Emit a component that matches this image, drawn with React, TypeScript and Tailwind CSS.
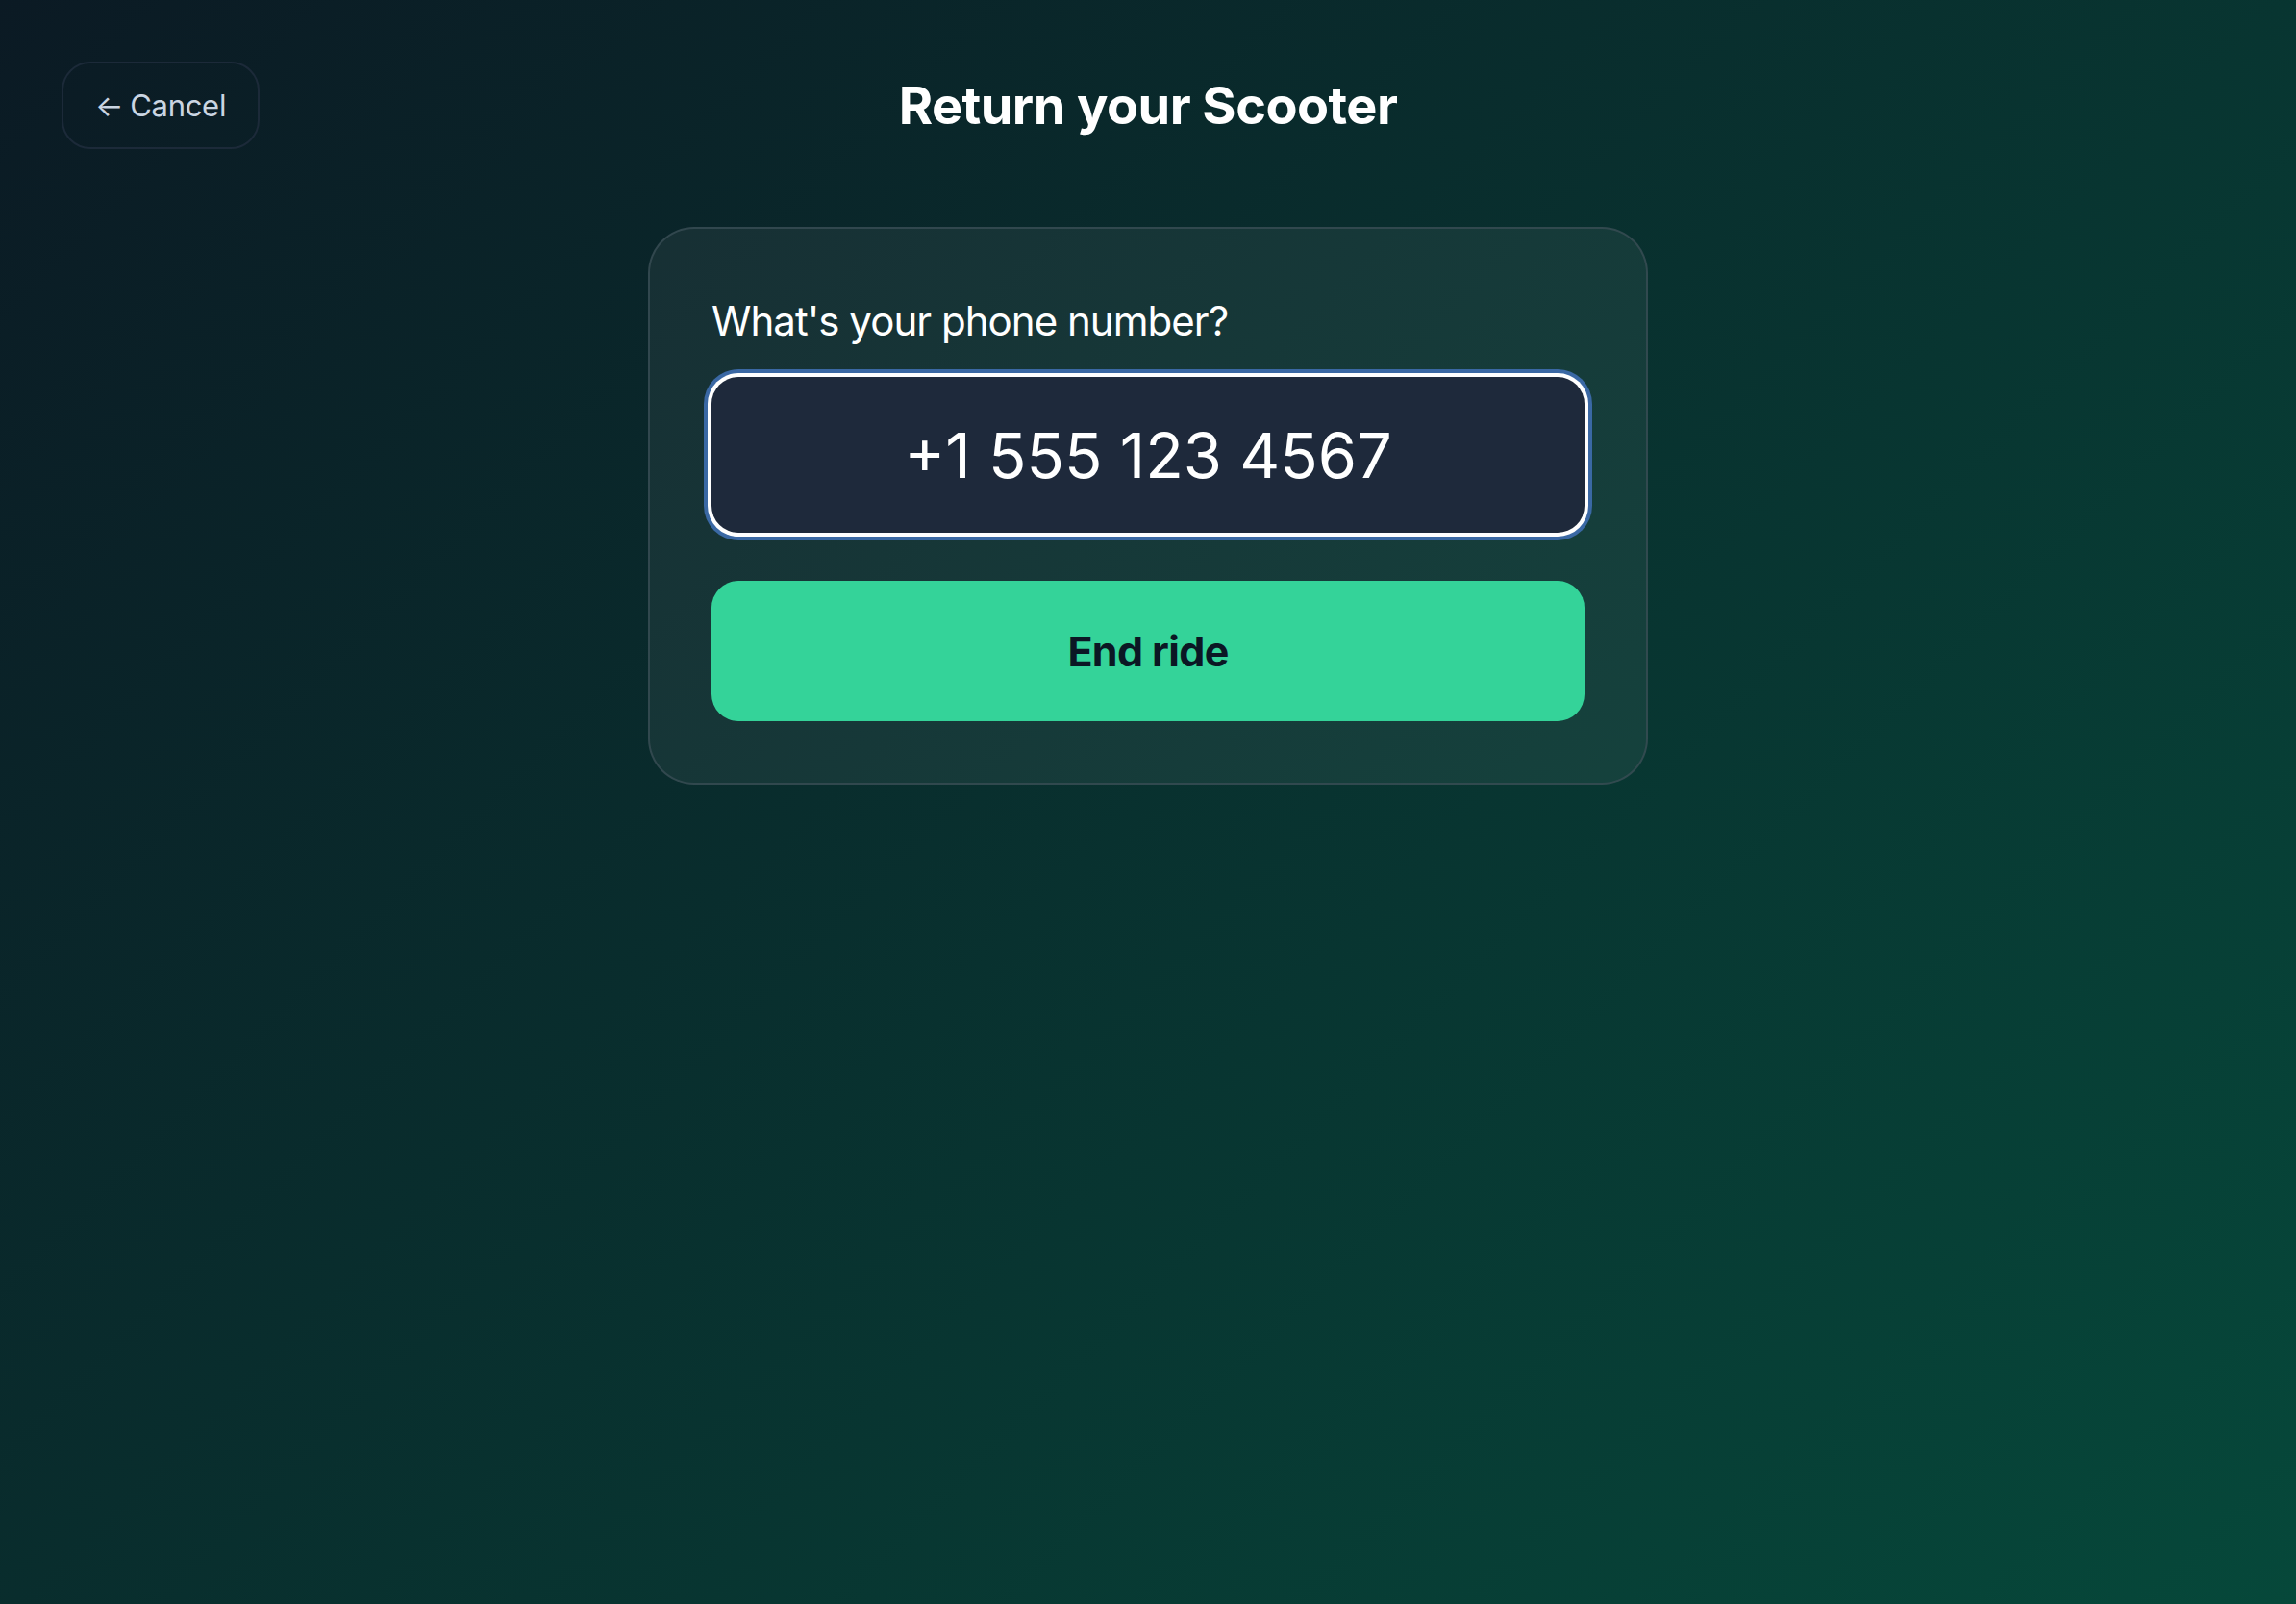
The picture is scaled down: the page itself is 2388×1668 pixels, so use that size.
import React from "react";

const ReturnScooter = () => {
  return (
    <div className="min-h-screen w-full bg-[linear-gradient(135deg,#0b1a24_0%,#06483a_100%)] font-['Inter','Noto_Sans',sans-serif] text-white">
      <header className="grid grid-cols-[1fr_auto_1fr] items-center px-16 pt-16">
        <div className="flex">
          <button
            type="button"
            className="flex h-[91px] items-center gap-[7px] rounded-[30px] border-2 border-[#1c2a39] px-[33px] text-[31px] tracking-[-0.01em] text-slate-300"
          >
            <span className="leading-none">←</span>
            <span className="leading-none">Cancel</span>
          </button>
        </div>
        <h1 className="text-[54px] font-bold leading-none tracking-[-0.01em]">
          Return your Scooter
        </h1>
        <div />
      </header>

      <div className="mx-auto mt-[81px] w-[1040px] rounded-[48px] border-2 border-[#3a4d55]/80 bg-white/[0.055] p-16">
        <label className="mb-[26px] block text-[42px] leading-[64px] tracking-[-0.023em]">
          What's your phone number?
        </label>
        <input
          type="tel"
          readOnly
          value="+1 555 123 4567"
          className="block h-[162px] w-full rounded-[28px] bg-[#1e293b] text-center text-[65px] text-white shadow-[0_0_0_4px_#ffffff,0_0_0_8px_#3a68a4] outline-none"
        />
        <button
          type="button"
          className="mt-[50px] flex h-[146px] w-full items-center justify-center rounded-[28px] bg-[#34d399] text-[43px] font-bold tracking-[-0.015em] text-[#0b1724]"
        >
          End ride
        </button>
      </div>
    </div>
  );
};

export default function App() {
  return <ReturnScooter />;
}
